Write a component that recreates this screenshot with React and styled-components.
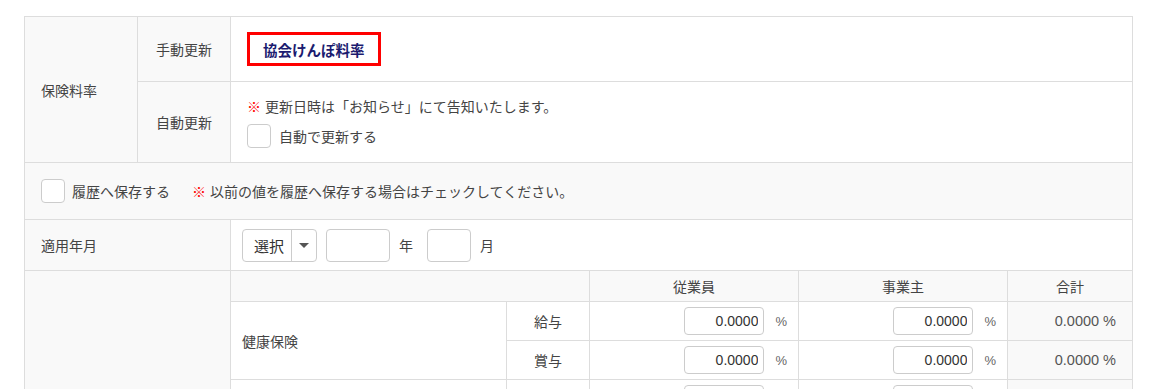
import React, { useState } from 'react';
import styled, { createGlobalStyle } from 'styled-components';

const GlobalStyle = createGlobalStyle`
  body {
    margin: 0;
    background: #fff;
    font-family: "Liberation Sans", "Noto Sans CJK JP", sans-serif;
    color: #444;
  }
`;

const Page = styled.div`
  padding: 16px 0 0 24px;
`;

const Table = styled.table`
  width: 1108px;
  border-collapse: collapse;
  table-layout: fixed;
  font-size: 14px;
`;

const Row = styled.tr`
  height: ${props => props.h}px;
`;

const Label = styled.td`
  border: 1px solid #ddd;
  background: #f9f9f9;
  padding: 0 16px;
  text-align: ${props => (props.center ? 'center' : 'left')};
  vertical-align: middle;
  white-space: nowrap;
`;

const Cell = styled.td`
  border: 1px solid #ddd;
  background: ${props => (props.gray ? '#f9f9f9' : '#fff')};
  padding: ${props => props.pad || '0 16px'};
  text-align: ${props => props.align || 'left'};
  vertical-align: middle;
  white-space: nowrap;
`;

const RateButton = styled.button`
  display: inline-flex;
  align-items: center;
  height: 34px;
  padding: 0 13px;
  border: 3px solid #f00;
  background: #fff;
  color: #1b1b6f;
  font-family: "Liberation Sans", "Noto Sans CJK JP", sans-serif;
  font-size: 14.5px;
  font-weight: bold;
  cursor: pointer;
`;

const Note = styled.div`
  line-height: 20px;
  margin-bottom: 7px;
`;

const Mark = styled.span`
  color: #f00;
  font-weight: bold;
  margin-right: 4px;
`;

const CheckLine = styled.label`
  display: flex;
  align-items: center;
  gap: ${props => props.gap || 8}px;
`;

const Box = styled.span`
  width: 22px;
  height: 22px;
  border: 1px solid #ccc;
  border-radius: 4px;
  background: #fff;
  display: inline-flex;
  align-items: center;
  justify-content: center;
  color: #2874f0;
  font-size: 14px;
  flex-shrink: 0;
`;

const Spacer = styled.span`
  width: 8px;
`;

const DateLine = styled.div`
  display: flex;
  align-items: center;
  gap: 9px;
`;

const Select = styled.div`
  display: flex;
  align-items: stretch;
  height: 31px;
  width: 73px;
  border: 1px solid #ccc;
  border-radius: 4px;
  background: #fff;
`;

const SelectText = styled.span`
  flex: 1;
  display: flex;
  align-items: center;
  padding-left: 11px;
  font-size: 15px;
  color: #333;
`;

const Caret = styled.span`
  width: 24px;
  border-left: 1px solid #ccc;
  display: flex;
  align-items: center;
  justify-content: center;

  &::after {
    content: '';
    border-left: 5px solid transparent;
    border-right: 5px solid transparent;
    border-top: 5px solid #555;
  }
`;

const TextBox = styled.input`
  box-sizing: border-box;
  width: ${props => props.w}px;
  height: ${props => props.h || 33}px;
  border: 1px solid #ccc;
  border-radius: 4px;
  padding: 0 5px;
  text-align: right;
  font-family: "Liberation Sans", sans-serif;
  font-size: 14px;
  color: #333;
  outline: none;
`;

const Unit = styled.span`
  margin: 0 ${props => props.mr || 0}px 0 ${props => props.ml || 0}px;
  color: #444;
`;

const Percent = styled.span`
  margin-left: 11px;
  color: #666;
  font-size: 13px;
`;

const RateLine = styled.div`
  display: flex;
  align-items: center;
  justify-content: flex-end;
  padding-right: 11px;
`;

const Total = styled.span`
  font-size: 14.5px;
  color: #555;
`;

const RateInput = ({ value }) => (
  <RateLine>
    <TextBox w={80} h={28} defaultValue={value} />
    <Percent>%</Percent>
  </RateLine>
);

const rows = [
  { name: '健康保険', kinds: ['給与', '賞与'] },
  { name: '介護保険', kinds: ['給与', '賞与'] },
];

export default function App() {
  const [auto, setAuto] = useState(false);
  const [history, setHistory] = useState(false);

  return (
    <Page>
      <GlobalStyle />
      <Table>
        <colgroup>
          <col style={{ width: 113 }} />
          <col style={{ width: 93 }} />
          <col style={{ width: 276 }} />
          <col style={{ width: 83 }} />
          <col style={{ width: 209 }} />
          <col style={{ width: 209 }} />
          <col style={{ width: 125 }} />
        </colgroup>
        <tbody>
          <Row h={65}>
            <Label rowSpan={2}>保険料率</Label>
            <Label center>手動更新</Label>
            <Cell colSpan={5}>
              <RateButton>協会けんぽ料率</RateButton>
            </Cell>
          </Row>
          <Row h={81}>
            <Label center>自動更新</Label>
            <Cell colSpan={5}>
              <Note>
                <Mark>※</Mark>更新日時は「お知らせ」にて告知いたします。
              </Note>
              <CheckLine onClick={() => setAuto(!auto)}>
                <Box>{auto ? '✓' : ''}</Box>
                自動で更新する
              </CheckLine>
            </Cell>
          </Row>
          <Row h={57}>
            <Cell colSpan={7} gray>
              <CheckLine gap={7}>
                <Box onClick={() => setHistory(!history)}>{history ? '✓' : ''}</Box>
                履歴へ保存する
                <Spacer />
                <span>
                  <Mark>※</Mark>以前の値を履歴へ保存する場合はチェックしてください。
                </span>
              </CheckLine>
            </Cell>
          </Row>
          <Row h={51}>
            <Label colSpan={2}>適用年月</Label>
            <Cell colSpan={5} pad="0 11px">
              <DateLine>
                <Select>
                  <SelectText>選択</SelectText>
                  <Caret />
                </Select>
                <TextBox w={64} />
                <Unit mr={5}>年</Unit>
                <TextBox w={44} />
                <Unit>月</Unit>
              </DateLine>
            </Cell>
          </Row>
          <Row h={31}>
            <Label colSpan={2} rowSpan={1 + rows.length * 2} />
            <Cell colSpan={2} gray />
            <Cell gray align="center">従業員</Cell>
            <Cell gray align="center">事業主</Cell>
            <Cell gray align="center">合計</Cell>
          </Row>
          {rows.map(row =>
            row.kinds.map((kind, i) => (
              <Row h={39} key={row.name + kind}>
                {i === 0 && (
                  <Cell rowSpan={row.kinds.length} pad="0 11px">
                    {row.name}
                  </Cell>
                )}
                <Cell align="center">{kind}</Cell>
                <Cell pad="0">
                  <RateInput value="0.0000" />
                </Cell>
                <Cell pad="0">
                  <RateInput value="0.0000" />
                </Cell>
                <Cell gray align="right" pad="0 16px">
                  <Total>0.0000 %</Total>
                </Cell>
              </Row>
            ))
          )}
        </tbody>
      </Table>
    </Page>
  );
}
